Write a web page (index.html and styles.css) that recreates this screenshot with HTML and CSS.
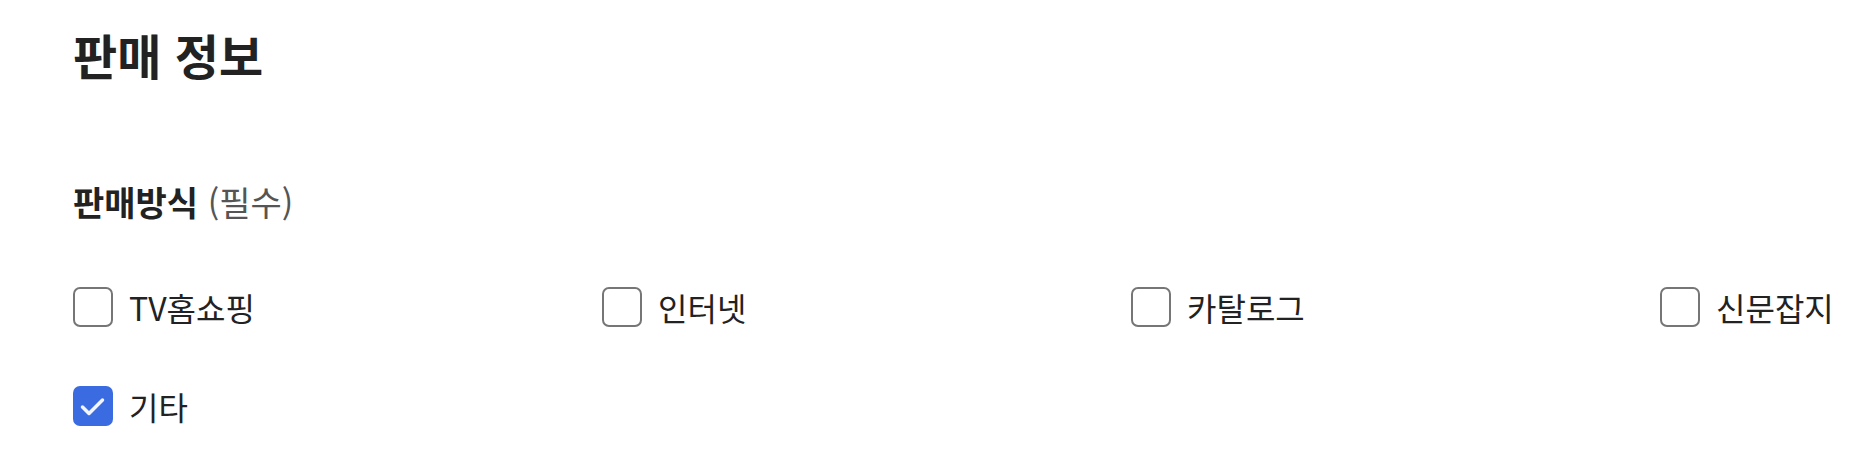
FILE: index.html
```html
<!DOCTYPE html>
<html lang="ko">

<head>
    <meta charset="UTF-8">
    <meta name="viewport" content="width=device-width, initial-scale=1.0">
    <link rel="stylesheet" href="styles.css">
    <title>판매 정보</title>
</head>

<body>
    <section class="sale-info">
        <h1 class="title">판매 정보</h1>

        <h2 class="field-title">판매방식 <span class="required">(필수)</span></h2>

        <div class="options">
            <label class="option">
                <span class="box"></span>
                <span class="text">TV홈쇼핑</span>
            </label>
            <label class="option">
                <span class="box"></span>
                <span class="text">인터넷</span>
            </label>
            <label class="option">
                <span class="box"></span>
                <span class="text">카탈로그</span>
            </label>
            <label class="option">
                <span class="box"></span>
                <span class="text">신문잡지</span>
            </label>
            <label class="option">
                <span class="box checked">
                    <svg width="40" height="40" viewBox="0 0 40 40">
                        <path d="M9.5 21l6.5 6.5 13.5-13.5" fill="none" stroke="#f2f5fd" stroke-width="3.5" stroke-linecap="round" stroke-linejoin="round" />
                    </svg>
                </span>
                <span class="text">기타</span>
            </label>
        </div>
    </section>
</body>

</html>
```

FILE: styles.css
```css
* {
    margin: 0;
    padding: 0;
    box-sizing: border-box;
}

body {
    background: #fff;
    color: #222;
    font-family: "Noto Sans CJK KR", "Noto Sans", sans-serif;
}

.sale-info {
    padding: 21px 0 0 73px;
}

.title {
    font-size: 48px;
    font-weight: 700;
    line-height: 66px;
}

.field-title {
    margin-top: 91px;
    font-size: 34px;
    font-weight: 700;
    line-height: 48px;
}

.required {
    font-weight: 400;
    color: #555;
}

.options {
    display: grid;
    grid-template-columns: repeat(3, 529px) 1fr;
    row-gap: 59px;
    margin-top: 61px;
}

.option {
    display: flex;
    align-items: center;
    gap: 16px;
    cursor: pointer;
}

.box {
    width: 40px;
    height: 40px;
    border: 2px solid #767676;
    border-radius: 7px;
    flex-shrink: 0;
}

.box.checked {
    background: #3b6be0;
    border: none;
}

.box svg {
    display: block;
}

.text {
    font-size: 32px;
    line-height: 40px;
}
```
